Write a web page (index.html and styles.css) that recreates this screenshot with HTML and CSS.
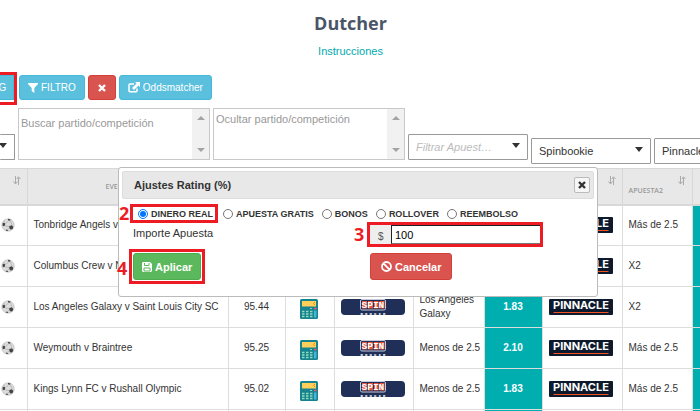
FILE: index.html
```html
<!DOCTYPE html>
<html lang="es">
<head>
    <meta charset="UTF-8">
    <meta name="viewport" content="width=device-width, initial-scale=1.0">
    <title>Dutcher</title>
    <link rel="stylesheet" href="styles.css">
</head>
<body>
    <svg class="symbols" aria-hidden="true">
        <symbol id="sort" viewBox="0 0 8 9">
            <path d="M2.5 0v7.5M.5 5.5l2 2.5 2-2.5M5.5 9V1.5M3.8 3l1.7-2.2L7.5 3" fill="none" stroke="#aaa" stroke-width="1"/>
        </symbol>
        <symbol id="ball" viewBox="0 0 14 14">
            <circle cx="7" cy="7" r="6.2" fill="#dcdcdc" stroke="#bbb" stroke-width=".7"/>
            <path d="M1.500 5.500l1.500-1 1.300 1.300-.5 2-2 .5zM8.300 8l2.700-.7 1.300 1.700-.8 2.200-2 .4-1.300-1.600zM7 .8l2.600.6-.5 1.300-2-.3zM4.500 12l1.500-.4 1.300 1.300-1.500.2z" fill="#444"/>
            <path d="M4.500 5.500L7.500 3M4 8l4 .5M9.500 3l1.500 4M3 4.200l.5-1.500M6 11.500L8.500 10" stroke="#aaa" stroke-width=".7"/>
        </symbol>
        <symbol id="calc" viewBox="0 0 18 20">
            <rect width="18" height="20" rx="1.500" fill="#17838f"/>
            <rect x="2" y="2" width="14" height="5.500" fill="#ffcf5c"/>
            <path d="M15 3l-1.500 1.500L15 6" fill="none" stroke="#e8891c"/>
            <path d="M10 9.500h2" stroke="#7fd6c8"/>
            <path d="M14 9.500h2.500" stroke="#f0567a" stroke-width="1.500"/>
            <path d="M2 12.500h2.500m1.500 0h2.500m1.500 0h2.500M2 15h2.500m1.500 0h2.500m1.500 0h2.500M2 17.500h2.500m1.500 0h2.500m1.500 0h2.500" stroke="#8fdcc0" stroke-width="1.500"/>
            <path d="M15.200 11.500v7" stroke="#45b5e0" stroke-width="2.500"/>
        </symbol>
        <symbol id="spin" viewBox="0 0 64 16">
            <rect width="64" height="16" rx="4" fill="#1f2f57"/>
            <rect x="19.500" y=".5" width="25" height="10.500" rx="1.500" fill="#1f2f57" stroke="#c3cbdc"/>
            <path d="M21 2h5v7.500h-5zM27 2h5v7.500h-5zM33 2h4.500v7.500H33zM38.500 2h5v7.500h-5z" fill="#e8553b"/>
            <g fill="#fff" font-family="Liberation Mono, monospace" font-weight="bold">
                <text x="20.500" y="8.500" font-size="9.500">SPIN</text>
                <text font-size="4"><tspan x="19.500" y="15.500">B</tspan><tspan x="24" y="15.500">O</tspan><tspan x="28.500" y="15.500">O</tspan><tspan x="33" y="15.500">K</tspan><tspan x="37.500" y="15.500">I</tspan><tspan x="42" y="15.500">E</tspan></text>
            </g>
        </symbol>
        <symbol id="pinnacle" viewBox="0 0 64 16">
            <rect width="64" height="16" rx="1" fill="#0d1a2e"/>
            <text x="32" y="10" fill="#fff" font-family="Inter, sans-serif" font-size="11" font-weight="700" text-anchor="middle">PINNACLE</text>
            <path d="M4.500 13.500h55" stroke="#f4511e" stroke-width="1.200"/>
        </symbol>
    </svg>

    <header class="page-header">
        <h1>Dutcher</h1>
        <a href="#">Instrucciones</a>
    </header>

    <div class="toolbar">
        <span class="marked-btn"><button type="button" class="btn btn-info btn-cut">G</button></span>
        <button type="button" class="btn btn-info">
            <svg width="10" height="10" viewBox="0 0 10 10"><path d="M0 0h10v1L6.300 5v5L3.700 8V5L0 1z" fill="#fff"/></svg>
            FILTRO
        </button>
        <button type="button" class="btn btn-danger" aria-label="Borrar">
            <svg width="8" height="8" viewBox="0 0 8 8"><path d="M1 1l6 6M7 1L1 7" stroke="#fff" stroke-width="2.400"/></svg>
        </button>
        <button type="button" class="btn btn-info">
            <svg width="12" height="11" viewBox="0 0 12 11"><path d="M6 2H1.800L1 2.800V9l.8.800h6.400L9 9V6.500" fill="none" stroke="#fff" stroke-width="1.500"/><path d="M7 0h5v5l-1.500-1.500L6 8 4 6l4.500-4.500z" fill="#fff"/></svg>
            Oddsmatcher
        </button>
    </div>

    <div class="filters">
        <div class="select select-cut"><select aria-label="Deporte"><option></option></select></div>
        <div class="area area-low">
            <textarea aria-label="Buscar" placeholder="Buscar partido/competición"></textarea>
            <div class="scroll"></div>
        </div>
        <div class="area">
            <textarea aria-label="Ocultar" placeholder="Ocultar partido/competición"></textarea>
            <div class="scroll"></div>
        </div>
        <div class="select empty"><select aria-label="Filtrar apuesta"><option>Filtrar Apuest…</option></select></div>
        <div class="select low"><select aria-label="Casa 1"><option>Spinbookie</option></select></div>
        <div class="select low"><select aria-label="Casa 2"><option>Pinnacle</option></select></div>
    </div>

    <table class="odds-table">
        <colgroup>
            <col class="c-sport"><col class="c-event"><col class="c-rating"><col class="c-calc"><col class="c-logo1">
            <col class="c-bet1"><col class="c-odd"><col class="c-logo2"><col class="c-bet2"><col>
        </colgroup>
        <thead>
            <tr>
                <th><svg class="sort"><use href="#sort"/></svg></th>
                <th class="event-head">EVENTO</th>
                <th></th><th></th><th></th><th></th><th></th>
                <th><svg class="sort"><use href="#sort"/></svg></th>
                <th><svg class="sort"><use href="#sort"/></svg>APUESTA2</th>
                <th></th>
            </tr>
        </thead>
        <tbody>
            <tr>
                <td class="sport"><svg class="ball"><use href="#ball"/></svg></td>
                <td>Tonbridge Angels v T</td>
                <td></td><td></td><td></td><td></td>
                <td class="odd"></td>
                <td><svg class="logo"><use href="#pinnacle"/></svg></td>
                <td>Más de 2.5</td>
                <td class="odd"></td>
            </tr>
            <tr>
                <td class="sport"><svg class="ball"><use href="#ball"/></svg></td>
                <td>Columbus Crew v N</td>
                <td></td><td></td><td></td><td></td>
                <td class="odd"></td>
                <td><svg class="logo"><use href="#pinnacle"/></svg></td>
                <td>X2</td>
                <td class="odd"></td>
            </tr>
            <tr>
                <td class="sport"><svg class="ball"><use href="#ball"/></svg></td>
                <td>Los Angeles Galaxy v Saint Louis City SC</td>
                <td class="rating">95.44</td>
                <td class="calc"><svg><use href="#calc"/></svg></td>
                <td><svg class="logo"><use href="#spin"/></svg></td>
                <td>Los Angeles Galaxy</td>
                <td class="odd">1.83</td>
                <td><svg class="logo"><use href="#pinnacle"/></svg></td>
                <td>X2</td>
                <td class="odd"></td>
            </tr>
            <tr>
                <td class="sport"><svg class="ball"><use href="#ball"/></svg></td>
                <td>Weymouth v Braintree</td>
                <td class="rating">95.25</td>
                <td class="calc"><svg><use href="#calc"/></svg></td>
                <td><svg class="logo"><use href="#spin"/></svg></td>
                <td>Menos de 2.5</td>
                <td class="odd">2.10</td>
                <td><svg class="logo"><use href="#pinnacle"/></svg></td>
                <td>Más de 2.5</td>
                <td class="odd"></td>
            </tr>
            <tr>
                <td class="sport"><svg class="ball"><use href="#ball"/></svg></td>
                <td>Kings Lynn FC v Rushall Olympic</td>
                <td class="rating">95.02</td>
                <td class="calc"><svg><use href="#calc"/></svg></td>
                <td><svg class="logo"><use href="#spin"/></svg></td>
                <td>Menos de 2.5</td>
                <td class="odd">1.83</td>
                <td><svg class="logo"><use href="#pinnacle"/></svg></td>
                <td>Más de 2.5</td>
                <td class="odd"></td>
            </tr>
            <tr>
                <td></td><td></td><td></td><td></td><td></td><td></td>
                <td class="odd"></td>
                <td></td><td></td>
                <td class="odd"></td>
            </tr>
        </tbody>
    </table>

    <form class="dialog" role="dialog" aria-labelledby="dialog-title">
        <div class="dialog-title">
            <span id="dialog-title">Ajustes Rating (%)</span>
            <button type="button" class="close" aria-label="Cerrar">
                <svg width="8" height="8" viewBox="0 0 8 8"><path d="M1 1l6 6M7 1L1 7" stroke="#333" stroke-width="2.400"/></svg>
            </button>
        </div>
        <div class="dialog-body">
            <div class="types">
                <label class="marked"><input type="radio" name="tipo" checked>DINERO REAL</label>
                <label><input type="radio" name="tipo">APUESTA GRATIS</label>
                <label><input type="radio" name="tipo">BONOS</label>
                <label><input type="radio" name="tipo">ROLLOVER</label>
                <label><input type="radio" name="tipo">REEMBOLSO</label>
            </div>
            <div class="columns">
                <label for="importe">Importe Apuesta</label>
                <div class="amount marked">
                    <span>$</span>
                    <input id="importe" type="text" value="100">
                </div>
                <button type="button" class="btn btn-success btn-big btn-marked">
                    <svg width="10" height="10" viewBox="0 0 10 10"><path d="M0 1l1-1h7l2 2v7l-1 1H1L0 9z" fill="#fff"/><path d="M2.500 1v2.500H7V1M2 9V6h6v3z" fill="none" stroke="#5cb85c"/></svg>
                    Aplicar
                </button>
                <button type="button" class="btn btn-danger btn-big">
                    <svg width="11" height="11" viewBox="0 0 11 11"><path d="M2.200 2.200l6.600 6.600M10 5.500a4.500 4.500 0 1 1-9 0 4.500 4.500 0 0 1 9 0z" fill="none" stroke="#fff" stroke-width="1.800"/></svg>
                    Cancelar
                </button>
            </div>
        </div>
        <span class="step step-2">2</span>
        <span class="step step-3">3</span>
        <span class="step step-4">4</span>
    </form>
</body>
</html>
```

FILE: styles.css
```css
* {
    box-sizing: border-box;
}
body {
    position: relative;
    margin: 0;
    height: 100vh;
    overflow: hidden;
    background-color: #fff;
    color: #333;
    font-family: "Liberation Sans", Arial, sans-serif;
    font-size: 10px;
}
button, input, select, textarea {
    font-family: inherit;
}
svg {
    display: block;
    flex: none;
}
.symbols {
    display: none;
}
.page-header {
    display: flex;
    flex-direction: column;
    align-items: center;
    gap: 10px;
    height: 75px;
    padding: 11px 0 0 1px;
}
.page-header h1 {
    margin: 0;
    color: #4a5568;
    font-family: "Open Sans", sans-serif;
    font-size: 18px;
    line-height: 24px;
}
.page-header a {
    color: #00aaad;
    font-size: 11px;
    line-height: 12px;
    text-decoration: none;
}

/* buttons */
.toolbar {
    display: flex;
    gap: 3px;
    height: 33px;
}
.btn {
    display: flex;
    align-items: center;
    justify-content: center;
    gap: 3px;
    height: 25px;
    padding: 0 8px;
    border: 1px solid;
    border-radius: 3px;
    color: #fff;
    font-size: 10px;
    cursor: pointer;
}
.btn-info {
    background-color: #5bc0de;
    border-color: #46b8da;
}
.btn-danger {
    padding: 0 9px;
    background-color: #d9534f;
    border-color: #d43f3a;
}
.btn-success {
    background-color: #5cb85c;
    border-color: #4cae4c;
}
.btn-big {
    height: 27px;
    font-size: 11px;
    font-weight: bold;
}
.btn-big.btn-danger {
    padding: 0 10px;
}
.btn-cut {
    width: 14px;
    padding: 0 8px 0 0;
    border-left: none;
    border-radius: 0;
}
.marked-btn {
    width: 14px;
    height: 27px;
    margin-right: 2px;
    outline: 3px solid #ed1c24;
}
.marked {
    outline: 3px solid #ed1c24;
}
.btn-marked {
    position: relative;
}
.btn-marked::after {
    content: "";
    position: absolute;
    inset: -5px;
    border: 3px solid #ed1c24;
}

/* filters */
.filters {
    display: flex;
    align-items: flex-end;
    gap: 3px;
    height: 60px;
    padding-bottom: 8px;
}
.area {
    display: flex;
    flex: none;
    width: 192px;
    height: 52px;
    border: 1px solid #c8c8c8;
}
.area textarea {
    flex: 1;
    min-width: 0;
    padding: 4px 2px;
    border: none;
    outline: none;
    resize: none;
    overflow: hidden;
    font-size: 11px;
    line-height: 13px;
}
.area-low textarea {
    padding-top: 8px;
}
.area textarea::placeholder {
    color: #999;
}
.scroll {
    display: flex;
    flex-direction: column;
    justify-content: space-between;
    align-items: center;
    width: 17px;
    padding: 7px 0;
    background-color: #f1f1f1;
}
.scroll::before, .scroll::after {
    content: "";
    border: 4px solid transparent;
}
.scroll::before {
    border-top: none;
    border-bottom-color: #a3a3a3;
}
.scroll::after {
    border-bottom: none;
    border-top-color: #a3a3a3;
}
.select {
    position: relative;
    width: 120px;
    height: 26px;
    flex: none;
}
.select::after {
    content: "";
    position: absolute;
    top: 9px;
    right: 8px;
    border: 4px solid transparent;
    border-top: 5px solid #333;
    border-bottom: none;
    pointer-events: none;
}
.select select {
    appearance: none;
    width: 100%;
    height: 100%;
    padding: 0 7px;
    border: 1px solid #999;
    border-radius: 1px;
    background-color: #fff;
    color: #333;
    font-size: 11px;
}
.select-cut {
    width: 15px;
}
.select-cut select {
    border-left: none;
}
.select.empty select {
    color: #bbb;
    font-style: italic;
}
.select.low {
    margin-bottom: -4px;
}

/* table */
.odds-table {
    width: 100%;
    table-layout: fixed;
    border-collapse: collapse;
}
.c-sport { width: 27px; }
.c-event { width: 201px; }
.c-rating { width: 57px; }
.c-calc { width: 49px; }
.c-logo1 { width: 79px; }
.c-bet1 { width: 71px; }
.c-odd { width: 58px; }
.c-logo2 { width: 80px; }
.c-bet2 { width: 70px; }
.odds-table th {
    position: relative;
    height: 36px;
    padding: 9px 6px 0;
    background-color: #e8e8e8;
    border: 1px solid #d8d8d8;
    border-bottom-width: 2px;
    color: #999;
    font-family: "Open Sans", sans-serif;
    font-size: 7px;
    font-weight: 600;
    text-align: left;
}
.odds-table .event-head {
    padding: 0 0 0 78px;
}
.odds-table td {
    height: 41px;
    padding: 0 2px 0 6px;
    border: 1px solid #ddd;
    line-height: 14px;
}
.odds-table th:first-child, .odds-table td:first-child {
    border-left: none;
}
.odds-table th:last-child, .odds-table td:last-child {
    border-right: none;
}
.sort {
    position: absolute;
    top: 7px;
    right: 6px;
    width: 8px;
    height: 9px;
}
.odds-table .sport {
    padding: 0 0 0 1px;
}
.ball {
    width: 14px;
    height: 14px;
}
.odds-table .rating {
    padding: 0;
    text-align: center;
}
.odds-table .calc {
    padding: 4px 0 0 14px;
}
.calc svg {
    width: 18px;
    height: 20px;
}
.logo {
    width: 64px;
    height: 16px;
}
.odds-table .odd {
    padding: 0;
    background-color: #00aeb0;
    color: #fff;
    font-weight: bold;
    text-align: center;
}

/* dialog */
.dialog {
    position: absolute;
    top: 167px;
    left: calc(50% - 232px);
    width: 480px;
    height: 130px;
    padding: 3px;
    border: 1px solid #bbb;
    border-radius: 3px;
    background-color: #fff;
}
.dialog-title {
    display: flex;
    align-items: center;
    justify-content: space-between;
    height: 28px;
    padding: 0 3px 0 11px;
    border: 1px solid #ddd;
    border-radius: 2px;
    background-color: #e8e8e8;
    font-size: 11px;
    font-weight: bold;
}
.close {
    display: flex;
    align-items: center;
    justify-content: center;
    width: 16px;
    height: 16px;
    padding: 0;
    border: 1px solid #bbb;
    border-radius: 2px;
    background-color: #f6f6f6;
}
.dialog-body {
    padding: 8px 50px 0 11px;
}
.types {
    display: flex;
    gap: 8px;
    height: 18px;
}
.types label {
    display: flex;
    align-items: center;
    gap: 3px;
    height: 13px;
    font-size: 9px;
    font-weight: bold;
    white-space: nowrap;
}
.types .marked {
    padding: 0 2px 0 5px;
}
.types input {
    width: 10px;
    height: 10px;
    margin: 0;
}
.columns {
    display: grid;
    grid-template-columns: 237px 1fr;
    row-gap: 9px;
    justify-items: start;
    font-size: 11px;
}
.columns > label {
    padding-top: 2px;
}
.amount {
    display: flex;
    width: 170px;
    height: 19px;
}
.amount span {
    width: 21px;
    padding: 6px 0 0 8px;
    background-color: #eee;
    color: #555;
    font-size: 10px;
    line-height: 12px;
}
.amount input {
    flex: 1;
    min-width: 0;
    padding: 0 3px;
    border: 1px solid #222;
    border-right: none;
    border-bottom-color: #777;
    color: #000;
    font-size: 11px;
}

/* numbered steps over the dialog */
.step {
    position: absolute;
    color: #ed1c24;
    font-family: "Open Sans", sans-serif;
    font-size: 18px;
    font-weight: bold;
    line-height: 18px;
}
.step-2 { top: 36px; left: 0; }
.step-3 { top: 57px; left: 235px; }
.step-4 { top: 91px; left: -2px; }
```
